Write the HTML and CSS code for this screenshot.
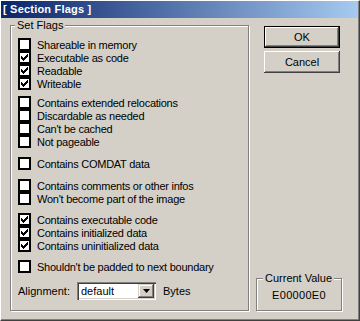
FILE: index.html
```html
<!DOCTYPE html>
<html lang="en">
<head>
  <meta charset="UTF-8">
  <title>Section Flags</title>
  <link rel="stylesheet" href="styles.css">
</head>
<body>
  <svg width="0" height="0" class="defs">
    <symbol id="tick" viewBox="0 0 7 7">
      <rect x="0" y="2" width="1" height="3"/>
      <rect x="1" y="3" width="1" height="3"/>
      <rect x="2" y="4" width="1" height="3"/>
      <rect x="3" y="3" width="1" height="3"/>
      <rect x="4" y="2" width="1" height="3"/>
      <rect x="5" y="1" width="1" height="3"/>
      <rect x="6" y="0" width="1" height="3"/>
    </symbol>
  </svg>

  <div class="window">
    <div class="titlebar">[ Section Flags ]</div>

    <div class="client">
      <!-- Flag checkboxes -->
      <fieldset class="group flags">
        <legend>Set Flags</legend>

        <div class="block">
          <label class="check"><span class="box"></span>Shareable in memory</label>
          <label class="check"><span class="box"><svg><use href="#tick"/></svg></span>Executable as code</label>
          <label class="check"><span class="box"><svg><use href="#tick"/></svg></span>Readable</label>
          <label class="check"><span class="box"><svg><use href="#tick"/></svg></span>Writeable</label>
        </div>

        <div class="block tight">
          <label class="check"><span class="box"></span>Contains extended relocations</label>
          <label class="check"><span class="box"></span>Discardable as needed</label>
          <label class="check"><span class="box"></span>Can't be cached</label>
          <label class="check"><span class="box"></span>Not pageable</label>
        </div>

        <div class="block wide">
          <label class="check"><span class="box"></span>Contains COMDAT data</label>
        </div>

        <div class="block wide">
          <label class="check"><span class="box"></span>Contains comments or other infos</label>
          <label class="check"><span class="box"></span>Won't become part of the image</label>
        </div>

        <div class="block">
          <label class="check"><span class="box"><svg><use href="#tick"/></svg></span>Contains executable code</label>
          <label class="check"><span class="box"><svg><use href="#tick"/></svg></span>Contains initialized data</label>
          <label class="check"><span class="box"><svg><use href="#tick"/></svg></span>Contains uninitialized data</label>
        </div>

        <div class="block">
          <label class="check"><span class="box"></span>Shouldn't be padded to next boundary</label>
        </div>

        <div class="align-row">
          <span class="align-label">Alignment:</span>
          <div class="combo">
            <span class="combo-text">default</span>
            <span class="combo-btn">
              <svg width="7" height="4" viewBox="0 0 7 4"><path d="M0 0H7L3.5 4Z"/></svg>
            </span>
          </div>
          <span class="bytes">Bytes</span>
        </div>
      </fieldset>

      <!-- Buttons and current value -->
      <div class="side">
        <button class="btn default">OK</button>
        <button class="btn">Cancel</button>
        <fieldset class="group current">
          <legend>Current Value</legend>
          <div class="value">E00000E0</div>
        </fieldset>
      </div>
    </div>
  </div>
</body>
</html>
```

FILE: styles.css
```css
* {
  box-sizing: border-box;
}

body {
  margin: 0;
  background-color: #D4D0C8;
  font-family: "Liberation Sans", Arial, sans-serif;
  font-size: 11px;
  color: #000000;
}

.defs {
  position: absolute;
}

/* Window frame */
.window {
  width: 360px;
  height: 321px;
  border: 1px solid;
  border-color: #FFFFFF #404040 #404040 #FFFFFF;
  box-shadow: inset -1px -1px 0 #808080;
  display: flex;
  flex-direction: column;
}

.titlebar {
  height: 17px;
  margin-right: 1px;
  padding-left: 2px;
  line-height: 17px;
  background: linear-gradient(to right, #0A246A, #A6CAF0);
  color: #FFFFFF;
  font-weight: bold;
  letter-spacing: 0.2px;
}

.client {
  flex: 1;
  display: flex;
  padding: 1px 0 0 9px;
}

/* Etched group boxes */
.group {
  margin: 0;
  border: 1px solid #808080;
  box-shadow: 1px 1px 0 #FFFFFF, inset 1px 1px 0 #FFFFFF;
}

.group legend {
  background-color: #D4D0C8;
  padding: 0 2px;
  line-height: 13px;
}

.flags {
  width: 239px;
  margin-bottom: 9px;
  padding: 6px 0 0 7px;
}

.flags legend {
  margin-left: -3px;
}

.block + .block {
  margin-top: 8px;
}

.block.tight {
  margin-top: 6px;
}

.block.wide {
  margin-top: 9px;
}

.check {
  display: flex;
  align-items: center;
  height: 13px;
  letter-spacing: -0.25px;
  white-space: nowrap;
}

.box {
  width: 13px;
  height: 13px;
  margin-right: 6px;
  border: 2px solid #000000;
  background-color: #FFFFFF;
  display: flex;
  align-items: center;
  justify-content: center;
  flex-shrink: 0;
}

.box svg {
  width: 7px;
  height: 7px;
  fill: #000000;
}

/* Alignment combo */
.align-row {
  display: flex;
  align-items: center;
  height: 18px;
  margin-top: 9px;
}

.align-label {
  width: 59px;
}

.combo {
  width: 79px;
  height: 18px;
  display: flex;
  align-items: center;
  background-color: #FFFFFF;
  box-shadow: inset 1px 1px 0 #808080, inset 2px 2px 0 #404040,
              inset -1px -1px 0 #FFFFFF, inset -2px -2px 0 #D4D0C8;
  padding: 2px;
}

.combo-text {
  flex: 1;
  padding-left: 2px;
}

.combo-btn {
  width: 16px;
  height: 14px;
  display: flex;
  align-items: center;
  justify-content: center;
  background-color: #D4D0C8;
  box-shadow: inset -1px -1px 0 #404040, inset 1px 1px 0 #D4D0C8,
              inset -2px -2px 0 #808080, inset 2px 2px 0 #FFFFFF;
}

.bytes {
  margin-left: 7px;
}

/* Right column */
.side {
  width: 86px;
  margin-left: 7px;
  padding: 7px 0 9px;
  display: flex;
  flex-direction: column;
}

.btn {
  width: 76px;
  height: 22px;
  margin-left: 8px;
  padding: 0;
  border: none;
  background-color: #D4D0C8;
  font: inherit;
  color: #000000;
  box-shadow: inset -1px -1px 0 #404040, inset 1px 1px 0 #FFFFFF,
              inset -2px -2px 0 #808080, inset 2px 2px 0 #D4D0C8;
}

.btn + .btn {
  margin-top: 3px;
}

.btn.default {
  border: 1px solid #000000;
}

.current {
  height: 39px;
  margin-top: auto;
  padding: 4px 0 0;
}

.current legend {
  margin-left: 6px;
}

.value {
  text-align: center;
  line-height: 13px;
  letter-spacing: 0.3px;
}
```
